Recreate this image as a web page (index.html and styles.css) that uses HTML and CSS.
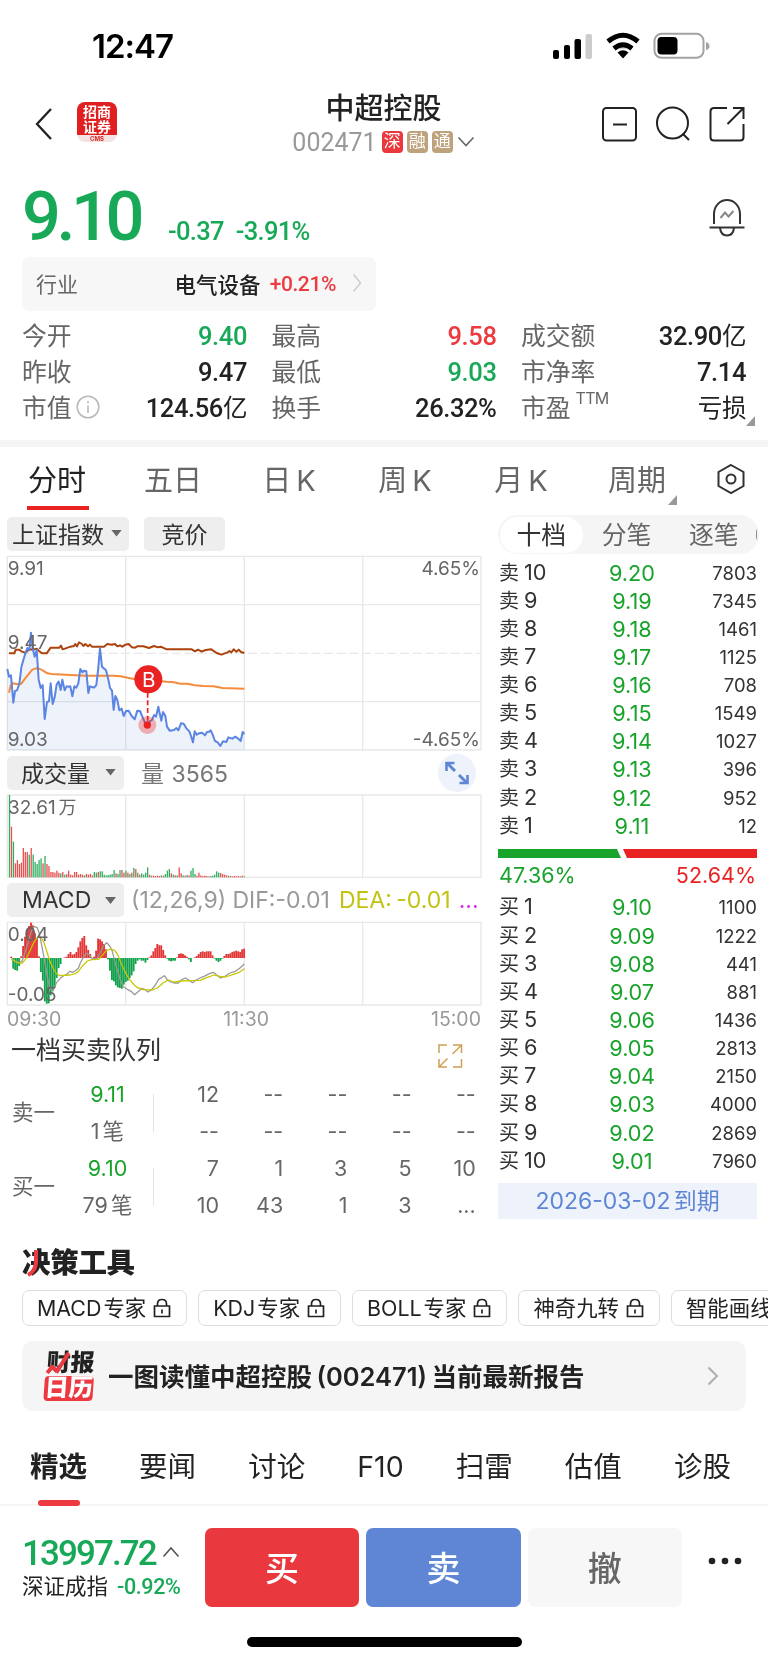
FILE: index.html
```html
<!DOCTYPE html>
<html lang="zh-CN">
<head>
    <meta charset="UTF-8">
    <meta name="viewport" content="width=device-width, initial-scale=1.0">
    <title>中超控股 002471</title>
    <link rel="stylesheet" href="styles.css">
</head>
<body>
    <div class="status-bar">
        <span class="time">12:47</span>
        <svg class="status-icons" width="158" height="28" viewBox="0 0 158 28">
            <rect x="1" y="18" width="6" height="9" rx="2"/>
            <rect x="12" y="13" width="6" height="14" rx="2"/>
            <rect x="22.500" y="7" width="6.500" height="20" rx="2"/>
            <rect x="33.500" y="2" width="6.500" height="25" rx="2" fill="#ccc"/>
            <g fill="none" stroke="#000" stroke-width="5">
                <path d="M56 9.500Q71 -3 86 9.500"/>
                <path d="M62 16.500Q71 9 80 16.500"/>
            </g>
            <path d="M65.500 20.500Q71 16 76.500 20.500L71 26.500Z"/>
            <rect x="102.500" y="1.800" width="49" height="24" rx="7" fill="none" stroke="#a3a3a3" stroke-width="2"/>
            <rect x="105.500" y="5" width="20" height="17.500" rx="4"/>
            <path d="M154 10Q157.500 11 157.500 14T154 18Z" fill="#a3a3a3"/>
        </svg>
    </div>

    <header>
        <svg class="back" width="20" height="36" viewBox="0 0 20 36"><path d="M17 3L3 18L17 33"/></svg>
        <div class="broker">
            <span>招商<br>证券</span>
            <b>CMS</b>
        </div>
        <div class="title">
            <h1>中超控股</h1>
            <div class="code">
                <span class="num">002471</span>
                <i class="tag tag-red">深</i><i class="tag">融</i><i class="tag">通</i>
                <svg width="18" height="12" viewBox="0 0 18 12"><path d="M1.500 1.500L9 9.500L16.500 1.500"/></svg>
            </div>
        </div>
        <svg class="tools" width="146" height="38" viewBox="0 0 146 38">
            <rect x="3" y="3" width="33" height="32.500" rx="3.500"/>
            <path d="M13 19.500H27"/>
            <circle cx="72.500" cy="18" r="15.500"/>
            <path d="M82.500 28.500L89 35"/>
            <path d="M127 3H114Q110.500 3 110.500 6.500V32Q110.500 35.500 114 35.500H140Q143.500 35.500 143.500 32V19M133 3H143.500V14M143 3.500L127.500 19"/>
        </svg>
    </header>

    <section class="quote">
        <div class="price-line">
            <strong class="price">9.10</strong>
            <span class="change">-0.37</span>
            <span class="change">-3.91%</span>
            <svg class="bell" width="38" height="40" viewBox="0 0 38 40">
                <path d="M6 27V17A13 14 0 0 1 32 17V27M1.500 30.500H36.500M12 31Q13 38.500 19 38.500T26 31"/>
                <path class="thin" d="M12.500 21L17 15.500L20.500 19.500L25.500 14"/>
            </svg>
        </div>
        <div class="industry">
            <span class="gray">行业</span>
            <b>电气设备</b>
            <span class="num red">+0.21%</span>
            <svg width="10" height="20" viewBox="0 0 10 20"><path d="M1.500 1.500L8.500 10L1.500 18.500"/></svg>
        </div>
        <div class="stats">
            <div><span>今开</span><b class="green">9.40</b></div>
            <div><span>最高</span><b class="red">9.58</b></div>
            <div><span>成交额</span><b>32.90<em>亿</em></b></div>
            <div><span>昨收</span><b>9.47</b></div>
            <div><span>最低</span><b class="green">9.03</b></div>
            <div><span>市净率</span><b>7.14</b></div>
            <div><span>市值<svg width="24" height="24" viewBox="0 0 24 24"><circle cx="12" cy="12" r="10.800"/><path d="M12 10.500V18M12 6V8.200"/></svg></span><b>124.56<em>亿</em></b></div>
            <div><span>换手</span><b>26.32%</b></div>
            <div><span>市盈<sup>TTM</sup></span><b><em>亏损</em></b><i class="corner"></i></div>
        </div>
    </section>

    <nav class="periods">
        <a class="active">分时</a>
        <a>五日</a>
        <a>日<em>K</em></a>
        <a>周<em>K</em></a>
        <a>月<em>K</em></a>
        <a>周期<i class="corner"></i></a>
        <svg width="30" height="32" viewBox="0 0 30 32"><path d="M15 2L27.500 9V23L15 30L2.500 23V9Z"/><circle cx="15" cy="16" r="4.500"/></svg>
    </nav>

    <main>
        <div class="charts">
            <div class="chart-head">
                <span class="pick pick-index">上证指数<i></i></span>
                <span class="pick pick-bid">竞价</span>
            </div>
            <svg class="price-chart" viewBox="0 15 1446 591">
                <path class="grid" d="M22 19H1443V600H22ZM377 19V600M733 19V600M1088 19V600M22 164H1443M22 455H1443"/>
                <path class="grid dash" d="M22 310H1443"/>
                <path id="area" class="area"/>
                <polyline class="index" points="27,310 43,310 47,299 58,299 64,304 76,308 88,298 100,299 110,296 116,302 126,310 140,310 152,293 178,293 183,287 188,298 197,295 211,290 222,288 226,282 231,289 237,277 246,282 250,288 256,282 264,289 270,284 276,290 312,290 322,282 336,284 345,282 352,289 360,286 367,290 376,284 386,282 396,292 405,293 412,289 430,289 447,294 462,288 474,292 482,290 500,298 575,298 585,304 594,299 605,305 617,300 634,298 650,309 664,314 683,307 688,303 694,307 701,298 709,305 716,299 723,306 733,309"/>
                <polyline class="average" points="27,428 32,406 38,400 52,403 64,401 75,386 88,370 97,359 108,355 120,357 129,362 142,370 155,372 211,375 258,377 340,377 362,379 387,384 412,389 450,389 499,395 522,397 541,401 562,401 584,406 609,408 640,409 668,414 733,416"/>
                <polyline id="price" class="price-path" points="22,357 27,380 33,376 40,458 45,423 51,421 58,402 64,352 70,330 77,308 82,294 88,300 93,248 98,294 104,320 110,300 116,389 122,414 128,405 134,507 141,456 147,454 152,400 158,462 164,442 170,403 176,395 182,420 187,389 194,421 200,409 206,410 211,409 217,439 223,409 229,413 235,400 241,357 248,367 252,362 259,364 265,429 270,409 276,411 282,413 289,405 294,362 300,295 306,350 318,361 325,388 330,414 336,422 341,480 346,438 352,450 358,481 365,476 371,498 378,483 386,482 395,498 404,508 412,482 420,483 428,502 436,520 443,525 449,514 456,510 462,495 468,500 475,470 479,490 484,512 489,486 496,498 501,530 509,542 522,540 529,534 535,541 543,520 551,521 560,536 568,544 573,558 579,577 584,544 590,554 597,550 606,548 615,556 621,546 627,545 632,541 638,554 645,573 653,577 661,588 669,574 679,576 685,562 697,566 706,560 716,567 722,573 728,546 733,552"/>
                <path class="buy-line" d="M443 428V520"/>
                <circle cx="442" cy="525" r="27" fill="#e92222" opacity=".33"/>
                <circle cx="442" cy="525" r="11" fill="#e92222"/>
                <circle cx="445" cy="388" r="42" fill="#e92222"/>
                <text class="buy-mark" x="446" y="411">B</text>
                <text x="23" y="75">9.91</text>
                <text x="23" y="298">9.47</text>
                <text x="23" y="588">9.03</text>
                <text class="end" x="1440" y="75">4.65%</text>
                <text class="end" x="1440" y="588">-4.65%</text>
            </svg>
            <div class="chart-head volume-head">
                <span class="pick">成交量<i></i></span>
                <span class="volume-now">量 3565</span>
                <svg class="expand" width="38" height="38" viewBox="0 0 38 38">
                    <circle cx="19" cy="19" r="19" fill="#edf2fb" stroke="none"/>
                    <path d="M17 17L9 9M21 21L29 29" stroke-width="3"/>
                    <path d="M8.500 17V9H16.500M21.500 29H29.500V21" stroke-width="2.600"/>
                </svg>
            </div>
            <svg class="volume-chart" viewBox="0 132 1446 252">
                <path class="grid" d="M22 135H1443V382H22ZM377 135V382M733 135V382M1088 135V382"/>
                <g id="volume"></g>
                <text x="24" y="191">32.61<tspan font-size="54" dx="8">万</tspan></text>
            </svg>
            <div class="chart-head macd-head">
                <span class="pick">MACD<i></i></span>
                <span class="macd-args">(12,26,9) DIF:-0.01</span>
                <span class="macd-dea">DEA: -0.01</span>
                <span class="macd-more">...</span>
            </div>
            <svg class="macd-chart" viewBox="0 513 1446 255">
                <path class="grid" d="M22 517H1443V765H22ZM377 517V765M733 517V765M1088 517V765"/>
                <g id="macd"></g>
                <polyline class="dif" points="34,628 46,634 58,638 66,634 76,606 86,570 94,544 102,530 111,532 118,550 124,580 130,612 136,645 142,680 148,710 155,722 162,716 170,697 181,685 190,678 200,673 210,664 218,667 226,662 235,655 241,639 250,622 258,610 266,612 276,625 290,627 300,610 310,588 320,578 329,588 336,601 344,632 352,661 361,690 370,710 382,718 393,724 404,734 414,725 426,715 436,719 444,726 455,719 466,705 476,688 486,682 493,677 501,688 511,696 522,699 535,699 545,689 556,684 566,690 578,698 588,690 600,684 612,679 628,671 640,667 650,675 662,684 676,678 690,669 706,664 719,655 733,642"/>
                <polyline class="dea" points="34,626 52,638 66,640 78,626 90,602 101,578 112,562 122,562 131,575 141,606 149,632 159,654 170,672 180,677 210,675 225,671 235,665 247,648 262,633 275,629 296,628 306,617 319,602 332,597 344,601 354,616 364,641 375,665 385,683 398,700 412,713 430,719 457,720 472,714 489,699 505,690 524,696 545,693 575,692 600,691 620,683 642,675 660,679 676,681 698,674 716,668 733,656"/>
                <text x="23" y="573">0.04</text>
                <text x="23" y="753">-0.05</text>
            </svg>
            <div class="times"><span>09:30</span><span>11:30</span><span>15:00</span></div>

            <div class="queue-head">
                <h2>一档买卖队列</h2>
                <svg width="26" height="26" viewBox="0 0 26 26"><path d="M2 10V2H10M16 2H24.500V10M24.500 16V24H16M10 24H2V16M24 2.500L15.500 11M10.500 15.500L2.500 23.500"/></svg>
            </div>
            <div class="queue">
                <div class="side">卖一</div>
                <div class="best"><b>9.11</b><span>1<em>笔</em></span></div>
                <div class="lots">
                    <span>12</span><span>--</span><span>--</span><span>--</span><span>--</span>
                    <span>--</span><span>--</span><span>--</span><span>--</span><span>--</span>
                </div>
            </div>
            <div class="queue">
                <div class="side">买一</div>
                <div class="best"><b>9.10</b><span>79<em>笔</em></span></div>
                <div class="lots">
                    <span>7</span><span>1</span><span>3</span><span>5</span><span>10</span>
                    <span>10</span><span>43</span><span>1</span><span>3</span><span>...</span>
                </div>
            </div>
        </div>

        <aside class="book">
            <div class="switch"><span class="active">十档</span><span>分笔</span><span>逐笔</span></div>
            <ul>
                <li><span>卖<em>10</em></span><b>9.20</b><i>7803</i></li>
                <li><span>卖<em>9</em></span><b>9.19</b><i>7345</i></li>
                <li><span>卖<em>8</em></span><b>9.18</b><i>1461</i></li>
                <li><span>卖<em>7</em></span><b>9.17</b><i>1125</i></li>
                <li><span>卖<em>6</em></span><b>9.16</b><i>708</i></li>
                <li><span>卖<em>5</em></span><b>9.15</b><i>1549</i></li>
                <li><span>卖<em>4</em></span><b>9.14</b><i>1027</i></li>
                <li><span>卖<em>3</em></span><b>9.13</b><i>396</i></li>
                <li><span>卖<em>2</em></span><b>9.12</b><i>952</i></li>
                <li><span>卖<em>1</em></span><b>9.11</b><i>12</i></li>
            </ul>
            <svg class="ratio" width="259" height="9" viewBox="0 0 259 9">
                <polygon points="0,0 119,0 123,9 0,9" fill="#18a32b"/>
                <polygon points="125,0 259,0 259,9 129,9" fill="#e92222"/>
            </svg>
            <div class="percent"><span>47.36%</span><span>52.64%</span></div>
            <ul>
                <li><span>买<em>1</em></span><b>9.10</b><i>1100</i></li>
                <li><span>买<em>2</em></span><b>9.09</b><i>1222</i></li>
                <li><span>买<em>3</em></span><b>9.08</b><i>441</i></li>
                <li><span>买<em>4</em></span><b>9.07</b><i>881</i></li>
                <li><span>买<em>5</em></span><b>9.06</b><i>1436</i></li>
                <li><span>买<em>6</em></span><b>9.05</b><i>2813</i></li>
                <li><span>买<em>7</em></span><b>9.04</b><i>2150</i></li>
                <li><span>买<em>8</em></span><b>9.03</b><i>4000</i></li>
                <li><span>买<em>9</em></span><b>9.02</b><i>2869</i></li>
                <li><span>买<em>10</em></span><b>9.01</b><i>7960</i></li>
            </ul>
            <div class="expiry">2026-03-02<em>到期</em></div>
        </aside>
    </main>

    <section class="decision">
        <h2>决策工具<svg width="14" height="28" viewBox="0 0 14 28"><path d="M9 1V12Q9 22 1 26"/></svg></h2>
        <div class="chips">
            <span>MACD<em>专家</em><svg width="18" height="20" viewBox="0 0 18 20"><path d="M1.500 8H16.500V18.500H1.500ZM4.500 8V6Q4.500 1.500 9 1.500T13.500 6V8M9 11.500V15.500"/></svg></span>
            <span>KDJ<em>专家</em><svg width="18" height="20" viewBox="0 0 18 20"><path d="M1.500 8H16.500V18.500H1.500ZM4.500 8V6Q4.500 1.500 9 1.500T13.500 6V8M9 11.500V15.500"/></svg></span>
            <span>BOLL<em>专家</em><svg width="18" height="20" viewBox="0 0 18 20"><path d="M1.500 8H16.500V18.500H1.500ZM4.500 8V6Q4.500 1.500 9 1.500T13.500 6V8M9 11.500V15.500"/></svg></span>
            <span>神奇九转<svg width="18" height="20" viewBox="0 0 18 20"><path d="M1.500 8H16.500V18.500H1.500ZM4.500 8V6Q4.500 1.500 9 1.500T13.500 6V8M9 11.500V15.500"/></svg></span>
            <span>智能画线<svg width="18" height="20" viewBox="0 0 18 20"><path d="M1.500 8H16.500V18.500H1.500ZM4.500 8V6Q4.500 1.500 9 1.500T13.500 6V8M9 11.500V15.500"/></svg></span>
        </div>
        <div class="report">
            <div class="calendar">
                <span>财报</span><b>日历</b>
                <svg width="26" height="25" viewBox="0 0 26 25"><path d="M2 22L6 16L12 20L22 2"/></svg>
            </div>
            <p>一图读懂中超控股 (002471) 当前最新报告</p>
            <svg class="arrow" width="12" height="20" viewBox="0 0 12 20"><path d="M1.500 1.500L10 10L1.500 18.500"/></svg>
        </div>
    </section>

    <nav class="topics">
        <a class="active">精选</a><a>要闻</a><a>讨论</a><a>F10</a><a>扫雷</a><a>估值</a><a>诊股</a>
    </nav>

    <footer>
        <div class="index-info">
            <div class="index-value">13997.72<svg width="18" height="12" viewBox="0 0 18 12"><path d="M1.500 10.500L9 2L16.500 10.500"/></svg></div>
            <div class="index-name">深证成指<span>-0.92%</span></div>
        </div>
        <button class="buy">买</button>
        <button class="sell">卖</button>
        <button class="cancel">撤</button>
        <svg class="more" width="34" height="8" viewBox="0 0 34 8"><circle cx="4" cy="4" r="3.300"/><circle cx="17" cy="4" r="3.300"/><circle cx="30" cy="4" r="3.300"/></svg>
    </footer>
    <div class="home-bar"></div>

    <script src="charts.js"></script>
</body>
</html>
```
FILE: styles.css
```css
* {
    box-sizing: border-box;
}
body {
    margin: 0;
    width: 768px;
    height: 1662px;
    overflow: hidden;
    background: #fff;
    color: #222;
    font-family: Inter, "Noto Sans CJK SC", sans-serif;
}
h1, h2, p, ul {
    margin: 0;
    padding: 0;
}
em, i {
    font-style: normal;
}
svg {
    display: block;
    flex: none;
}
svg path {
    fill: none;
}
.green {
    color: #17a958;
}
.red {
    color: #ec3a40;
}
.gray {
    color: #666;
}
.num {
    font-family: Roboto, "Noto Sans CJK SC", sans-serif;
}
.corner {
    position: absolute;
    width: 9px;
    height: 10px;
    background: #999;
    clip-path: polygon(100% 0, 100% 100%, 0 100%);
}

/* status bar */
.status-bar {
    display: flex;
    justify-content: space-between;
    align-items: center;
    height: 92px;
    padding: 0 58px 0 92px;
}
.time {
    font-size: 33px;
    font-weight: 600;
    letter-spacing: -1px;
    color: #000;
}
.status-icons path {
    fill: #000;
}
.status-icons g path {
    fill: none;
}
.status-icons path:last-child {
    fill: #a3a3a3;
}

/* header */
header {
    display: flex;
    height: 90px;
    padding: 0 22px 0 34px;
}
.back {
    margin-top: 14px;
    stroke: #222;
    stroke-width: 2.3;
}
.back path, .tools * {
    fill: none;
}
.broker {
    width: 40px;
    height: 40px;
    margin: 10px 0 0 23px;
    padding-top: 2px;
    border-radius: 8px;
    background: linear-gradient(#e02020 33px, #f3e3e3 33px);
    color: #fff;
    font: 700 14px/15px "Noto Sans CJK SC", sans-serif;
    text-align: center;
}
.broker span {
    display: block;
}
.broker b {
    display: block;
    margin-top: 1px;
    font: 700 6px/7px Inter, sans-serif;
    color: #d22;
}
.title {
    width: 200px;
    margin: 0 auto;
    text-align: center;
    transform: translateX(25px);
}
h1 {
    font-size: 29px;
    font-weight: 500;
    line-height: 34px;
}
.code {
    display: flex;
    align-items: center;
    justify-content: center;
    gap: 4px;
    height: 32px;
    color: #999;
    font-size: 25px;
}
.code .num {
    margin-right: 1px;
    letter-spacing: 0;
}
.tag {
    width: 21px;
    height: 22px;
    border-radius: 4px;
    background: #bda27c;
    color: #fff;
    font-size: 17px;
    line-height: 21px;
}
.tag-red {
    background: #e9393e;
}
.code svg {
    stroke: #666;
    stroke-width: 1.6;
}
.tools {
    margin-top: 13px;
    stroke: #222;
    stroke-width: 2;
}

/* quote */
.quote {
    height: 265px;
    padding: 0 22px;
    border-bottom: 7px solid #f5f5f5;
}
.price-line {
    display: flex;
    align-items: baseline;
    height: 75px;
    color: #17a958;
    font-family: Roboto, sans-serif;
}
.price {
    width: 146px;
    font-size: 68.500px;
    font-weight: 500;
    line-height: 70px;
    letter-spacing: -4.500px;
}
.change {
    margin-right: 12px;
    font-size: 25.500px;
    font-weight: 500;
    line-height: 30px;
    letter-spacing: -.7px;
}
.bell {
    align-self: flex-start;
    margin: 15px 0 0 auto;
    stroke: #333;
    stroke-width: 2;
}
.bell .thin {
    stroke: #888;
}
.industry {
    display: flex;
    align-items: center;
    width: 354px;
    height: 54px;
    padding: 0 14px 2px 14px;
    border-radius: 7px;
    background: #f7f7f7;
    font-size: 21px;
}
.industry b {
    margin-left: auto;
    font-size: 21.500px;
    font-weight: 500;
}
.industry .num {
    margin: 2px 16px 0 9px;
    font-weight: 500;
    letter-spacing: -.4px;
}
.industry svg {
    stroke: #ccc;
    stroke-width: 1.5;
}
.stats {
    display: grid;
    grid-template-columns: 225px 225px 225px;
    column-gap: 24.500px;
    padding-top: 7px;
    font-size: 24.800px;
}
.stats div {
    position: relative;
    display: flex;
    align-items: center;
    justify-content: space-between;
    height: 36px;
}
.stats span {
    display: flex;
    align-items: center;
    padding-bottom: 4px;
    color: #666;
}
.stats svg {
    margin: 2px 0 0 4px;
    fill: none;
    stroke: #bbb;
    stroke-width: 1.6;
}
.stats sup {
    align-self: flex-start;
    margin-left: 5px;
    font-size: 16px;
    line-height: 20px;
    letter-spacing: -.7px;
}
.stats b {
    font-family: Roboto, "Noto Sans CJK SC", sans-serif;
    font-size: 25.500px;
    font-weight: 500;
    line-height: 36px;
    letter-spacing: -.4px;
}
.stats em {
    font-size: 24.500px;
    font-weight: 400;
    line-height: 20px;
}
.stats .corner {
    right: -9px;
    bottom: 0;
}

/* period tabs */
.periods {
    display: flex;
    align-items: center;
    height: 68px;
    margin-left: -1px;
    color: #666;
}
.periods a {
    position: relative;
    width: 116px;
    height: 68px;
    font-size: 29px;
    line-height: 67px;
    text-align: center;
}
.periods em {
    margin-left: 5px;
}
.periods .active {
    color: #222;
}
.periods .active::after {
    content: "";
    position: absolute;
    left: 28px;
    bottom: 5px;
    width: 62px;
    height: 4px;
    background: #e92222;
}
.periods .corner {
    right: 18px;
    bottom: 10px;
}
.periods svg {
    margin: 0 0 4px 21px;
    fill: none;
    stroke: #333;
    stroke-width: 2;
}

/* charts */
main {
    display: flex;
    height: 715px;
}
.charts {
    width: 498px;
    flex: none;
}
.charts > svg {
    width: 482px;
}
.chart-head {
    display: flex;
    align-items: center;
    height: 40px;
    padding: 0 0 2px 7px;
    font-size: 23px;
}
.pick {
    display: flex;
    align-items: center;
    justify-content: space-between;
    width: 117px;
    height: 34px;
    padding: 0 8px 2px 14px;
    border-radius: 5px;
    background: #eee;
    color: #333;
}
.pick-index {
    width: 122px;
    padding: 0 7px 2px 5px;
}
.pick-bid {
    justify-content: center;
    width: 81px;
    margin-left: 15px;
    padding: 0 0 2px;
}
.pick i {
    width: 11px;
    height: 7px;
    background: #666;
    clip-path: polygon(0 0, 100% 0, 50% 100%);
}
.price-chart {
    height: 197px;
}
.volume-head {
    height: 42px;
    padding-bottom: 0;
}
.volume-now {
    padding-bottom: 2px;
    margin-left: 17px;
    color: #777;
    word-spacing: 1px;
}
.expand {
    margin-left: auto;
    margin-right: 22px;
    stroke: #5f86d5;
}
.volume-chart {
    height: 84px;
}
.macd-head {
    height: 43px;
    padding-bottom: 0;
    line-height: 43px;
}
.macd-head .pick {
    padding: 2px 8px 0 15px;
}
.macd-args, .macd-dea, .macd-more {
    padding-top: 2px;
}
.macd-args {
    margin-left: 7px;
    color: #999;
}
.macd-dea {
    margin-left: 9px;
    color: #c2c213;
    word-spacing: -2px;
}
.macd-more {
    margin-left: 8px;
    color: #dd2fe5;
}
.macd-chart {
    height: 85px;
}
.grid {
    stroke: #e8e8e8;
    stroke-width: 4;
}
.dash {
    stroke-dasharray: 27 11;
}
.price-chart .area {
    fill: #eef2fb;
    mix-blend-mode: multiply;
}
polyline {
    fill: none;
    stroke-width: 6;
    stroke-linejoin: round;
}
.index {
    stroke: #ad430c;
}
.average {
    stroke: #f58b3c;
}
.price-path {
    stroke: #5b85e3;
}
.buy-line {
    stroke: #e92222;
    stroke-width: 5;
    stroke-dasharray: 15 8;
}
.charts text {
    fill: #666;
    font-size: 57px;
}
.charts .end {
    text-anchor: end;
}
.charts .buy-mark {
    fill: #fff;
    font-size: 62px;
    text-anchor: middle;
}
.up {
    fill: #e23535;
}
.down {
    fill: #12a14b;
}
#volume {
    opacity: .85;
}
.dif, .dea {
    stroke-width: 3.800;
}
.dif {
    stroke: #999;
}
.dea {
    stroke: #c8c800;
}
.times {
    display: flex;
    justify-content: space-between;
    width: 481px;
    height: 26px;
    padding-left: 7px;
    color: #999;
    font-size: 19.500px;
    line-height: 26px;
}

/* order queue */
.queue-head {
    display: flex;
    justify-content: space-between;
    height: 44px;
    padding: 0 35px 0 11px;
}
.queue-head h2 {
    font-size: 25px;
    font-weight: 400;
    line-height: 36px;
    color: #333;
}
.queue-head svg {
    margin-top: 11px;
    stroke: #d0a056;
    stroke-width: 1.5;
}
.queue {
    display: flex;
    align-items: center;
    height: 74px;
    color: #666;
    font-size: 21.500px;
}
.side {
    width: 62px;
    padding: 0 0 5px 12px;
}
.best {
    width: 91px;
    line-height: 37px;
    text-align: center;
}
.best b {
    display: block;
    color: #18a32b;
    font-weight: 400;
}
.best em {
    margin-left: 3px;
}
.lots {
    display: grid;
    grid-template-columns: 66px repeat(4, 64.200px);
    line-height: 37px;
    text-align: right;
    background: linear-gradient(#e5e5e5, #e5e5e5) 0 18px / 1px 38px no-repeat;
}

/* order book */
.book {
    width: 259px;
}
.switch {
    position: relative;
    display: flex;
    width: 261px;
    height: 39px;
    padding: 1.500px;
    border-radius: 20px;
    background: #f5f5f5;
    color: #666;
    font-size: 24.800px;
    line-height: 36px;
    text-align: center;
}
.switch span {
    width: 88px;
}
.switch .active {
    width: 84px;
    border-radius: 18px;
    background: #fff;
    color: #333;
}
.switch::after {
    content: "";
    position: absolute;
    right: 0;
    top: 14px;
    width: 2px;
    height: 11px;
    border-left: 1.500px solid #888;
    border-radius: 50%;
}
.book ul {
    padding-top: 4.500px;
    list-style: none;
}
.book li {
    display: grid;
    grid-template-columns: 91px 86px 82px;
    height: 28.150px;
    font-size: 21.700px;
    line-height: 28px;
    color: #333;
}
.book li span {
    padding-left: 1px;
    font-size: 20px;
    line-height: 27px;
}
.book li em {
    margin-left: 5px;
    font-size: 21.700px;
}
.book li b {
    color: #18a32b;
    font-weight: 400;
    text-align: center;
}
.book li i {
    font-size: 18.500px;
    text-align: right;
}
.ratio {
    margin-top: 9px;
}
.percent {
    display: flex;
    justify-content: space-between;
    height: 31px;
    padding: 0 1px;
    color: #e92222;
    font-size: 21.500px;
    line-height: 34px;
}
.percent span:first-child {
    color: #18a32b;
}
.expiry {
    height: 36px;
    margin-top: 8px;
    background: #edf2fb;
    color: #5f86d5;
    font-size: 23px;
    line-height: 36px;
    text-align: center;
}
.expiry em {
    margin-left: 3px;
}

/* decision tools */
.decision {
    height: 195px;
    padding: 14px 22px 0;
}
.decision h2 {
    position: relative;
    height: 46px;
    font-size: 28.500px;
    font-weight: 900;
    line-height: 38px;
    letter-spacing: -.3px;
}
.decision h2 svg {
    position: absolute;
    left: 5px;
    top: 5px;
    stroke: #ec3a40;
    stroke-width: 4;
}
.chips {
    display: flex;
    gap: 11px;
    width: 746px;
    height: 36px;
    overflow: hidden;
}
.chips span {
    display: flex;
    align-items: center;
    flex: none;
    padding: 0 15px 0 14px;
    border: 1px solid #ddd;
    border-radius: 7px;
    font-size: 21.400px;
    line-height: 32px;
}
.chips em {
    margin-left: 2px;
}
.chips svg {
    margin-left: 7px;
    stroke: #222;
    stroke-width: 1.7;
}
.report {
    display: flex;
    align-items: center;
    width: 724px;
    height: 70px;
    margin-top: 15px;
    padding: 0 27px 0 23px;
    border-radius: 11px;
    background: #f5f5f5;
}
.calendar {
    position: relative;
    width: 49px;
    height: 51px;
    margin-right: 14px;
    font-size: 24px;
    font-weight: 900;
    text-align: center;
    transform: skewX(-4deg);
}
.calendar span, .calendar b {
    display: block;
    height: 25px;
    line-height: 24px;
}
.calendar b {
    border-radius: 4px;
    background: #ec3a40;
    color: #fff;
    font-weight: 900;
}
.calendar svg {
    position: absolute;
    left: 0;
    top: 0;
    stroke: #ec3a40;
    stroke-width: 4;
}
.report p {
    padding-bottom: 3px;
    font-size: 25.500px;
    font-weight: 600;
    word-spacing: -2px;
    white-space: nowrap;
}
.arrow {
    margin-left: auto;
    stroke: #aaa;
    stroke-width: 1.800;
}

/* topic tabs */
.topics {
    display: flex;
    justify-content: space-between;
    height: 81px;
    padding: 0 37px 0 30px;
    border-bottom: 2px solid #f5f5f5;
    font-size: 28.500px;
    line-height: 83px;
}
.topics .active {
    position: relative;
    font-weight: 700;
}
.topics .active::after {
    content: "";
    position: absolute;
    left: 8px;
    bottom: -2px;
    width: 42px;
    height: 6px;
    border-radius: 3px;
    background: #ec3a40;
}

/* trade bar */
footer {
    display: flex;
    height: 131px;
    padding: 22px 26px 0 22px;
}
.index-info {
    width: 183px;
    padding-top: 5px;
}
.index-value {
    display: flex;
    align-items: center;
    height: 41px;
    color: #17a958;
    font: 500 35px/41px Roboto, sans-serif;
    letter-spacing: -1.900px;
}
.index-value svg {
    margin: 0 0 4px 6px;
    stroke: #555;
    stroke-width: 1.600;
}
.index-name {
    font-size: 21.500px;
    line-height: 24px;
    white-space: nowrap;
}
.index-name span {
    margin-left: 9px;
    color: #17a958;
    font-family: Roboto, sans-serif;
    font-weight: 500;
    letter-spacing: -.4px;
}
button {
    width: 154.500px;
    height: 79px;
    margin: 0 7px 0 0;
    padding: 0 0 3px;
    border: none;
    border-radius: 7px;
    color: #fff;
    font: 500 34px "Noto Sans CJK SC", sans-serif;
}
.buy {
    background: #e9393e;
}
.sell {
    background: #5f86d5;
}
.cancel {
    background: #f7f7f7;
    color: #666;
}
.more {
    margin: 29px 0 0 19px;
    fill: #222;
}
.home-bar {
    width: 275px;
    height: 10px;
    margin-left: 247px;
    border-radius: 5px;
    background: #000;
}
```
FILE: charts.js
```js
// 正数为红柱，负数为绿柱，每分钟一根
const volume = [
    -247, 152, -107, 42, 52, 40, 44, 88, 76, 76, -68, 88, -68, -46, -40, -52, -57, 42, -64, 40,
    34, 16, 16, 14, 20, 14, -12, 16, -8, 10, 20, 8, 6, 16, 16, 8, 10, 8, -6, 10,
    8, 10, 6, -16, -14, 16, -18, -18, -8, -6, -7, -8, -10, -22, 12, -10, -22, 22, 14, -20,
    14, -10, 14, -28, 25, -14, 8, -12, -8, -14, -30, 8, -5, 5, 4, 5, 4, -6, 5, -10,
    -20, -25, 12, -8, 6, -6, 30, 12, -6, 5, -7, 6, -20, -28, -10, 5, 14, 6, 4, 5,
    4, 3, -4, -5, -8, -18, -14, 13, 10, 8, 6, -5, 4, 3, 4, 3, 4, 3, 5, -3
];
const macd = [
    4, -32, -36, -38, -24, 5, 36, 64, 86, 96, 106, 98, 74, 60, 5, -42, -68, -130, -137, -136,
    -112, -100, -90, -60, -30, -18, 0, 2, 4, 12, 18, 10, 12, 18, 32, 50, 60, 66, 38, 24,
    12, 0, 4, 22, 58, 56, 50, 42, 26, -4, -38, -66, -70, -82, -88, -90, -92, -80, -72, -68,
    -60, -52, -40, -18, -8, -4, -8, -8, -14, -6, 2, 8, 20, 30, 42, 38, 38, 24, 8, -2,
    -8, -10, -8, -8, 2, 12, 14, 12, 8, 4, -4, -12, 0, 2, 6, 12, 18, 20, 18, 20,
    20, 20, 8, -2, -8, -12, -8, -2, 6, 12, 12, 14, 18, 20, 22, 20, 18, 26, 28
];

function drawBars(id, data, start, base, width) {
    let html = '';
    data.forEach(function(value, i) {
        const height = Math.abs(value);
        // 成交量始终向上画，MACD 以零轴为界
        const y = id === 'volume' || value > 0 ? base - height : base;
        html += `<rect class="${value > 0 ? 'up' : 'down'}" x="${start + i * 5.92}" y="${y}" width="${width}" height="${height}"/>`;
    });
    document.getElementById(id).innerHTML = html;
}

drawBars('volume', volume, 26.5, 382, 4);
drawBars('macd', macd, 31, 624, 5.6);

// 价格线下方的填充
const points = document.getElementById('price').getAttribute('points');
document.getElementById('area').setAttribute('d', 'M22 600L' + points.replace(/ /g, 'L') + 'L733 600Z');
```
